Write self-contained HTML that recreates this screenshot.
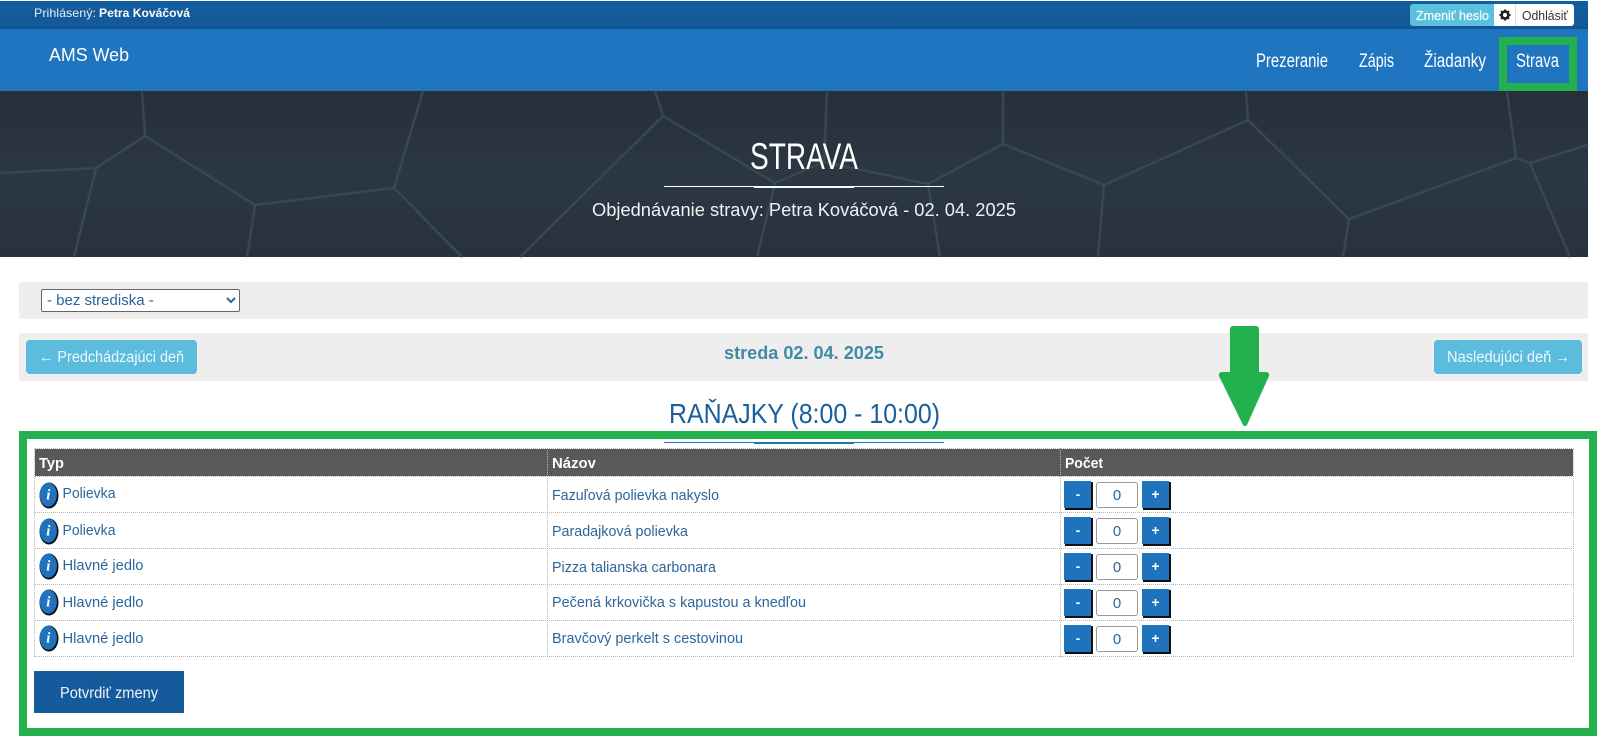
<!DOCTYPE html>
<html lang="sk">
<head>
<meta charset="utf-8">
<title>Strava</title>
<style>
html,body{margin:0;padding:0;width:1601px;height:745px;overflow:hidden;background:#fff;font-family:"Liberation Sans",sans-serif}
#stage{position:absolute;left:0;top:0;width:1601px;height:745px}
svg{position:absolute;left:0;top:0}
text{font-family:"Liberation Sans",sans-serif}
select{position:absolute;left:41px;top:289px;width:199px;height:23px;box-sizing:border-box;border:1px solid #666;border-radius:2px;background:#fff;color:#2a6499;font:15px "Liberation Sans",sans-serif;padding:0 0 0 1px;margin:0}
input{position:absolute;left:1096px;width:42px;height:26px;box-sizing:border-box;border:1px solid #999;border-radius:3px;background:#fff;color:#2d6699;font:15px "Liberation Sans",sans-serif;text-align:center;padding:0;margin:0}
</style>
</head>
<body>
<div id="stage">
<svg width="1601" height="745" viewBox="0 0 1601 745" xmlns="http://www.w3.org/2000/svg">
  <defs>
    <linearGradient id="tb" x1="0" y1="0" x2="0" y2="1"><stop offset="0" stop-color="#135c9f"/><stop offset=".85" stop-color="#145a9a"/><stop offset="1" stop-color="#125290"/></linearGradient>
    <linearGradient id="hero" x1="0" y1="0" x2="0" y2="1"><stop offset="0" stop-color="#262f3a"/><stop offset=".5" stop-color="#2b3743"/><stop offset="1" stop-color="#28323d"/></linearGradient>
    <filter id="soft" x="-1%" y="-5%" width="102%" height="110%"><feGaussianBlur stdDeviation="0.45"/></filter>
    <g id="info">
      <ellipse cx="10" cy="13.500" rx="9.500" ry="13" fill="#0a0f18"/>
      <ellipse cx="9.300" cy="12.700" rx="8.600" ry="12" fill="#1f72bc"/>
      <text x="9.300" y="17.500" font-size="15" font-weight="bold" font-style="italic" fill="#fff" text-anchor="middle" style="font-family:'Liberation Serif',serif">i</text>
    </g>
    <g id="btns">
      <rect x="1065" y="0" width="28" height="28" fill="#111"/>
      <rect x="1064" y="-1" width="27" height="27" fill="#1f72bc"/>
      <text x="1078" y="17" font-size="14" font-weight="bold" fill="#fff" text-anchor="middle">-</text>
      <rect x="1143" y="0" width="28" height="28" fill="#111"/>
      <rect x="1142" y="-1" width="27" height="27" fill="#1f72bc"/>
      <text x="1155.500" y="17" font-size="14" font-weight="bold" fill="#fff" text-anchor="middle">+</text>
    </g>
  </defs>

  <!-- top bars -->
  <rect x="0" y="1" width="1588" height="28" fill="url(#tb)"/>
  <rect x="0" y="29" width="1588" height="62" fill="#1f75bf"/>
  <text x="34" y="17" font-size="12" fill="#e6eef6" textLength="62" lengthAdjust="spacingAndGlyphs">Prihlásený:</text>
  <text x="99" y="17" font-size="12" font-weight="bold" fill="#fff" textLength="91" lengthAdjust="spacingAndGlyphs">Petra Kováčová</text>
  <text x="49" y="61" font-size="18" fill="#fff" textLength="80" lengthAdjust="spacingAndGlyphs">AMS Web</text>

  <path d="M1413 4H1494V26H1413a3 3 0 0 1-3-3V7a3 3 0 0 1 3-3z" fill="#5bc0de"/>
  <text x="1416" y="20" font-size="13" fill="#f2fbfe" stroke="#f2fbfe" stroke-width=".25" textLength="73" lengthAdjust="spacingAndGlyphs">Zmeniť heslo</text>
  <rect x="1494" y="4" width="21" height="22" fill="#fff"/>
  <path d="M1515 4H1571a3 3 0 0 1 3 3V23a3 3 0 0 1-3 3H1515z" fill="#fff"/>
  <rect x="1515" y="4" width="1" height="22" fill="#ddd"/>
  <circle cx="1505" cy="15" r="3.400" fill="none" stroke="#222" stroke-width="2.600"/>
  <path d="M1505 9.500v2M1505 18.500v2M1499.500 15h2M1508.500 15h2M1501.100 11.100l1.400 1.400M1507.500 17.500l1.400 1.400M1501.100 18.900l1.400-1.400M1507.500 12.500l1.400-1.400" stroke="#222" stroke-width="2"/>
  <text x="1522" y="20" font-size="13" fill="#333" textLength="46" lengthAdjust="spacingAndGlyphs">Odhlásiť</text>

  <g font-size="19" fill="#fff">
    <text x="1256" y="67" textLength="72" lengthAdjust="spacingAndGlyphs">Prezeranie</text>
    <text x="1359" y="67" textLength="35" lengthAdjust="spacingAndGlyphs">Zápis</text>
    <text x="1424" y="67" textLength="62" lengthAdjust="spacingAndGlyphs">Žiadanky</text>
    <text x="1516" y="67" textLength="43" lengthAdjust="spacingAndGlyphs">Strava</text>
  </g>
  <rect x="1503" y="41" width="70" height="46" fill="none" stroke="#22b14c" stroke-width="8"/>

  <!-- hero -->
  <rect x="0" y="91" width="1588" height="166" fill="url(#hero)"/>
  <g fill="none" stroke="#3b4d57" stroke-width="2" stroke-linejoin="round" filter="url(#soft)">
    <path d="M142 91L145 136L96 168L0 173M145 136L255 205L247 257M96 168L74 257M255 205L394 188L423 91M394 188L462 257M520 257L663 116L655 91M663 116L775 183L757 257M775 183L824 162L827 91M824 162L928 184L940 257M928 184L1003 144L1003 91M1003 144L1104 185L1098 257M1104 185L1248 120L1246 91M1248 120L1349 219L1343 257M1349 219L1516 158L1507 91M1516 158L1530 163L1588 145M1530 163L1570 257"/>
  </g>
  <text x="750" y="169" font-size="37" fill="#fff" textLength="108" lengthAdjust="spacingAndGlyphs">STRAVA</text>
  <rect x="664" y="186" width="280" height="1" fill="#fff"/>
  <rect x="754" y="186" width="100" height="2" fill="#fff"/>
  <text x="592" y="216" font-size="18.500" fill="#eef2f5" textLength="424" lengthAdjust="spacingAndGlyphs">Objednávanie stravy: Petra Kováčová - 02. 04. 2025</text>

  <!-- panels -->
  <rect x="19" y="282" width="1569" height="37" rx="2" fill="#eee"/>
  <rect x="19" y="333" width="1569" height="48" rx="2" fill="#eee"/>
  <rect x="26" y="340" width="171" height="34" rx="4" fill="#5bbcdd"/>
  <text x="39" y="362" font-size="15.500" fill="#f0fafd" textLength="145" lengthAdjust="spacingAndGlyphs">← Predchádzajúci deň</text>
  <rect x="1434" y="340" width="148" height="34" rx="4" fill="#5bbcdd"/>
  <text x="1447" y="362" font-size="15.500" fill="#f0fafd" textLength="123" lengthAdjust="spacingAndGlyphs">Nasledujúci deň →</text>
  <text x="724" y="359" font-size="18" font-weight="bold" fill="#3f8ba5" textLength="160" lengthAdjust="spacingAndGlyphs">streda 02. 04. 2025</text>

  <!-- heading -->
  <text x="669" y="423" font-size="28" fill="#1b5e9c" textLength="271" lengthAdjust="spacingAndGlyphs">RAŇAJKY (8:00 - 10:00)</text>
  <rect x="664" y="442" width="280" height="1" fill="#2272bd"/>
  <rect x="754" y="442" width="100" height="2" fill="#2272bd"/>

  <!-- table -->
  <rect x="35" y="449" width="1538" height="27" fill="#595959"/>
  <g font-size="15" font-weight="bold" fill="#fff">
    <text x="39" y="468" textLength="25" lengthAdjust="spacingAndGlyphs">Typ</text>
    <text x="552" y="468" textLength="44" lengthAdjust="spacingAndGlyphs">Názov</text>
    <text x="1065" y="468" textLength="38" lengthAdjust="spacingAndGlyphs">Počet</text>
  </g>
  <g stroke="#b5b5b5" stroke-width="1" stroke-dasharray="1 1" fill="none" shape-rendering="crispEdges">
    <path d="M35 448.500H1573M35 476.500H1573M35 512.500H1573M35 548.500H1573M35 584.500H1573M35 620.500H1573M35 656.500H1573"/>
    <path d="M34.500 448V657M547.500 448V657M1060.500 448V657M1573.500 448V657"/>
  </g>
  <use href="#info" x="39" y="482"/>
  <use href="#info" x="39" y="518"/>
  <use href="#info" x="39" y="553"/>
  <use href="#info" x="39" y="589"/>
  <use href="#info" x="39" y="625"/>
  <g font-size="15" fill="#2d6699">
    <text x="62.500" y="498" textLength="53" lengthAdjust="spacingAndGlyphs">Polievka</text>
    <text x="62.500" y="535" textLength="53" lengthAdjust="spacingAndGlyphs">Polievka</text>
    <text x="62.500" y="570" textLength="81" lengthAdjust="spacingAndGlyphs">Hlavné jedlo</text>
    <text x="62.500" y="607" textLength="81" lengthAdjust="spacingAndGlyphs">Hlavné jedlo</text>
    <text x="62.500" y="643" textLength="81" lengthAdjust="spacingAndGlyphs">Hlavné jedlo</text>
    <text x="552" y="500" textLength="167" lengthAdjust="spacingAndGlyphs">Fazuľová polievka nakyslo</text>
    <text x="552" y="536" textLength="136" lengthAdjust="spacingAndGlyphs">Paradajková polievka</text>
    <text x="552" y="572" textLength="164" lengthAdjust="spacingAndGlyphs">Pizza talianska carbonara</text>
    <text x="552" y="607" textLength="254" lengthAdjust="spacingAndGlyphs">Pečená krkovička s kapustou a knedľou</text>
    <text x="552" y="643" textLength="191" lengthAdjust="spacingAndGlyphs">Bravčový perkelt s cestovinou</text>
  </g>
  <use href="#btns" y="482"/>
  <use href="#btns" y="518"/>
  <use href="#btns" y="554"/>
  <use href="#btns" y="590"/>
  <use href="#btns" y="626"/>

  <rect x="34" y="671" width="150" height="42" fill="#155a9b"/>
  <text x="60" y="698" font-size="15.500" fill="#eef5fb" textLength="98" lengthAdjust="spacingAndGlyphs">Potvrdiť zmeny</text>

  <!-- annotations -->
  <rect x="23" y="435" width="1570" height="297" fill="none" stroke="#22b14c" stroke-width="8"/>
  <path d="M1233 326H1256a3 3 0 0 1 3 3V372H1266a3 3 0 0 1 3 4L1247 425a2.500 2.500 0 0 1-4 0L1219 376a3 3 0 0 1 3-4H1230V329a3 3 0 0 1 3-3z" fill="#22b14c"/>
</svg>

<select><option>- bez strediska -</option></select>
<input type="text" value="0" style="top:482px">
<input type="text" value="0" style="top:518px">
<input type="text" value="0" style="top:554px">
<input type="text" value="0" style="top:590px">
<input type="text" value="0" style="top:626px">
</div>
</body>
</html>
